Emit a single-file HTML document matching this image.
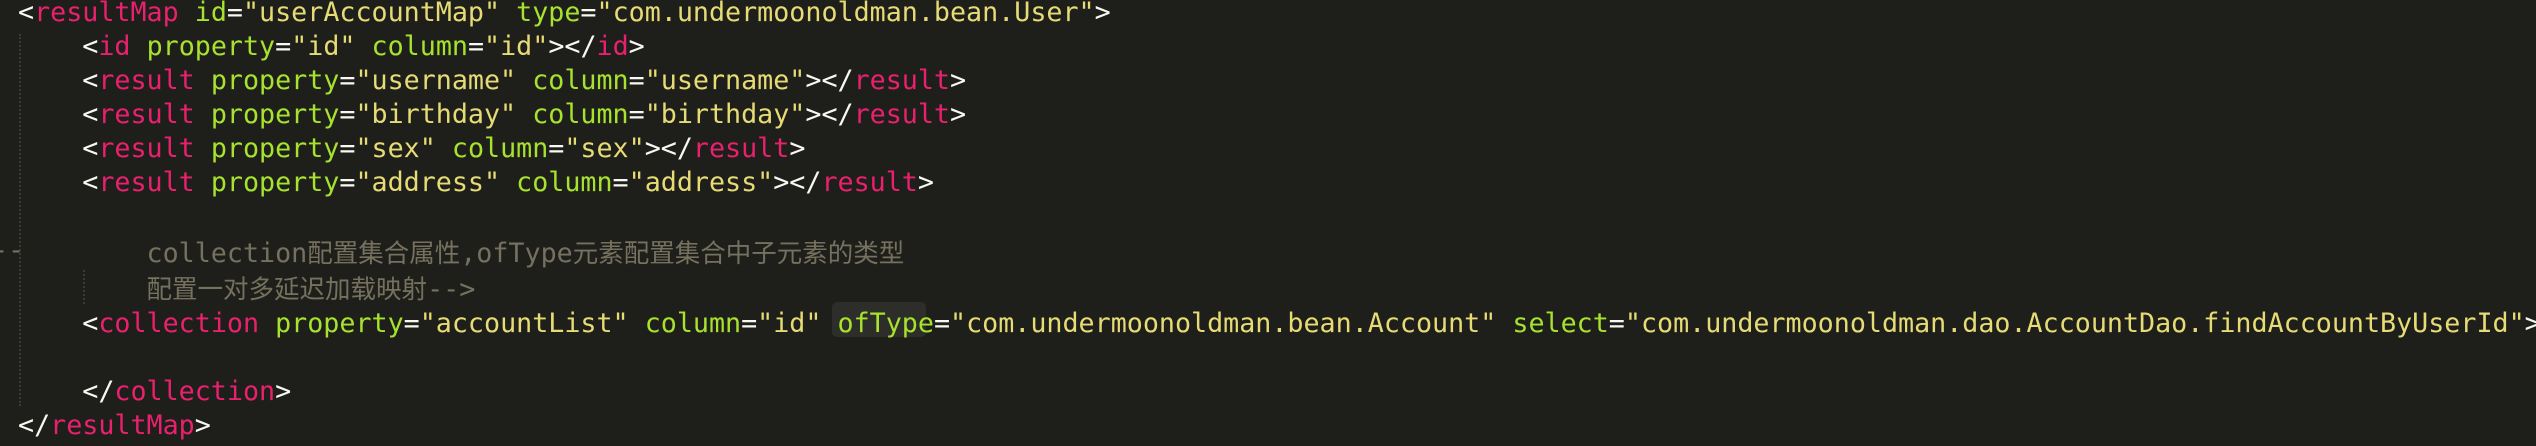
<!DOCTYPE html>
<html><head><meta charset="utf-8"><style>
html,body{margin:0;padding:0;background:#1e1f1b;width:2536px;height:446px;overflow:hidden}
.c{position:absolute;left:18px;top:-4px;font-family:"DejaVu Sans Mono","Liberation Mono","Noto Sans CJK SC",monospace;font-size:26.7px;line-height:34.1px;white-space:pre;color:#f8f8f2}
.t{color:#e8206e}.a{color:#a6e22e}.s{color:#e6db74}.m{color:#75715e}
.z{font-family:"Noto Sans CJK SC",sans-serif;font-size:25.5px}
.g{position:absolute;width:0;border-left:2px dotted #3a3b36}
.hl{position:absolute;left:832px;top:302px;width:94px;height:35px;background:#2d2e29;border-radius:5px}
</style></head><body>
<div class="g" style="left:19px;top:34px;height:372px"></div>
<div class="g" style="left:83px;top:270px;height:34px"></div>
<div class="hl"></div>
<div style="position:absolute;left:-8px;top:235px;font-family:'DejaVu Sans Mono',monospace;font-size:26.7px;color:#75715e">--</div>
<div class="c">&lt;<span class="t">resultMap</span> <span class="a">id</span>=<span class="s">"userAccountMap"</span> <span class="a">type</span>=<span class="s">"com.undermoonoldman.bean.User"</span>&gt;
    &lt;<span class="t">id</span> <span class="a">property</span>=<span class="s">"id"</span> <span class="a">column</span>=<span class="s">"id"</span>&gt;&lt;/<span class="t">id</span>&gt;
    &lt;<span class="t">result</span> <span class="a">property</span>=<span class="s">"username"</span> <span class="a">column</span>=<span class="s">"username"</span>&gt;&lt;/<span class="t">result</span>&gt;
    &lt;<span class="t">result</span> <span class="a">property</span>=<span class="s">"birthday"</span> <span class="a">column</span>=<span class="s">"birthday"</span>&gt;&lt;/<span class="t">result</span>&gt;
    &lt;<span class="t">result</span> <span class="a">property</span>=<span class="s">"sex"</span> <span class="a">column</span>=<span class="s">"sex"</span>&gt;&lt;/<span class="t">result</span>&gt;
    &lt;<span class="t">result</span> <span class="a">property</span>=<span class="s">"address"</span> <span class="a">column</span>=<span class="s">"address"</span>&gt;&lt;/<span class="t">result</span>&gt;

<span class="m">        collection<span class="z">配置集合属性</span>,ofType<span class="z">元素配置集合中子元素的类型</span></span>
<span class="m">        <span class="z">配置一对多延迟加载映射</span>--&gt;</span>
    &lt;<span class="t">collection</span> <span class="a">property</span>=<span class="s">"accountList"</span> <span class="a">column</span>=<span class="s">"id"</span> <span class="a">ofType</span>=<span class="s">"com.undermoonoldman.bean.Account"</span> <span class="a">select</span>=<span class="s">"com.undermoonoldman.dao.AccountDao.findAccountByUserId"</span>&gt;

    &lt;/<span class="t">collection</span>&gt;
&lt;/<span class="t">resultMap</span>&gt;</div>
</body></html>
